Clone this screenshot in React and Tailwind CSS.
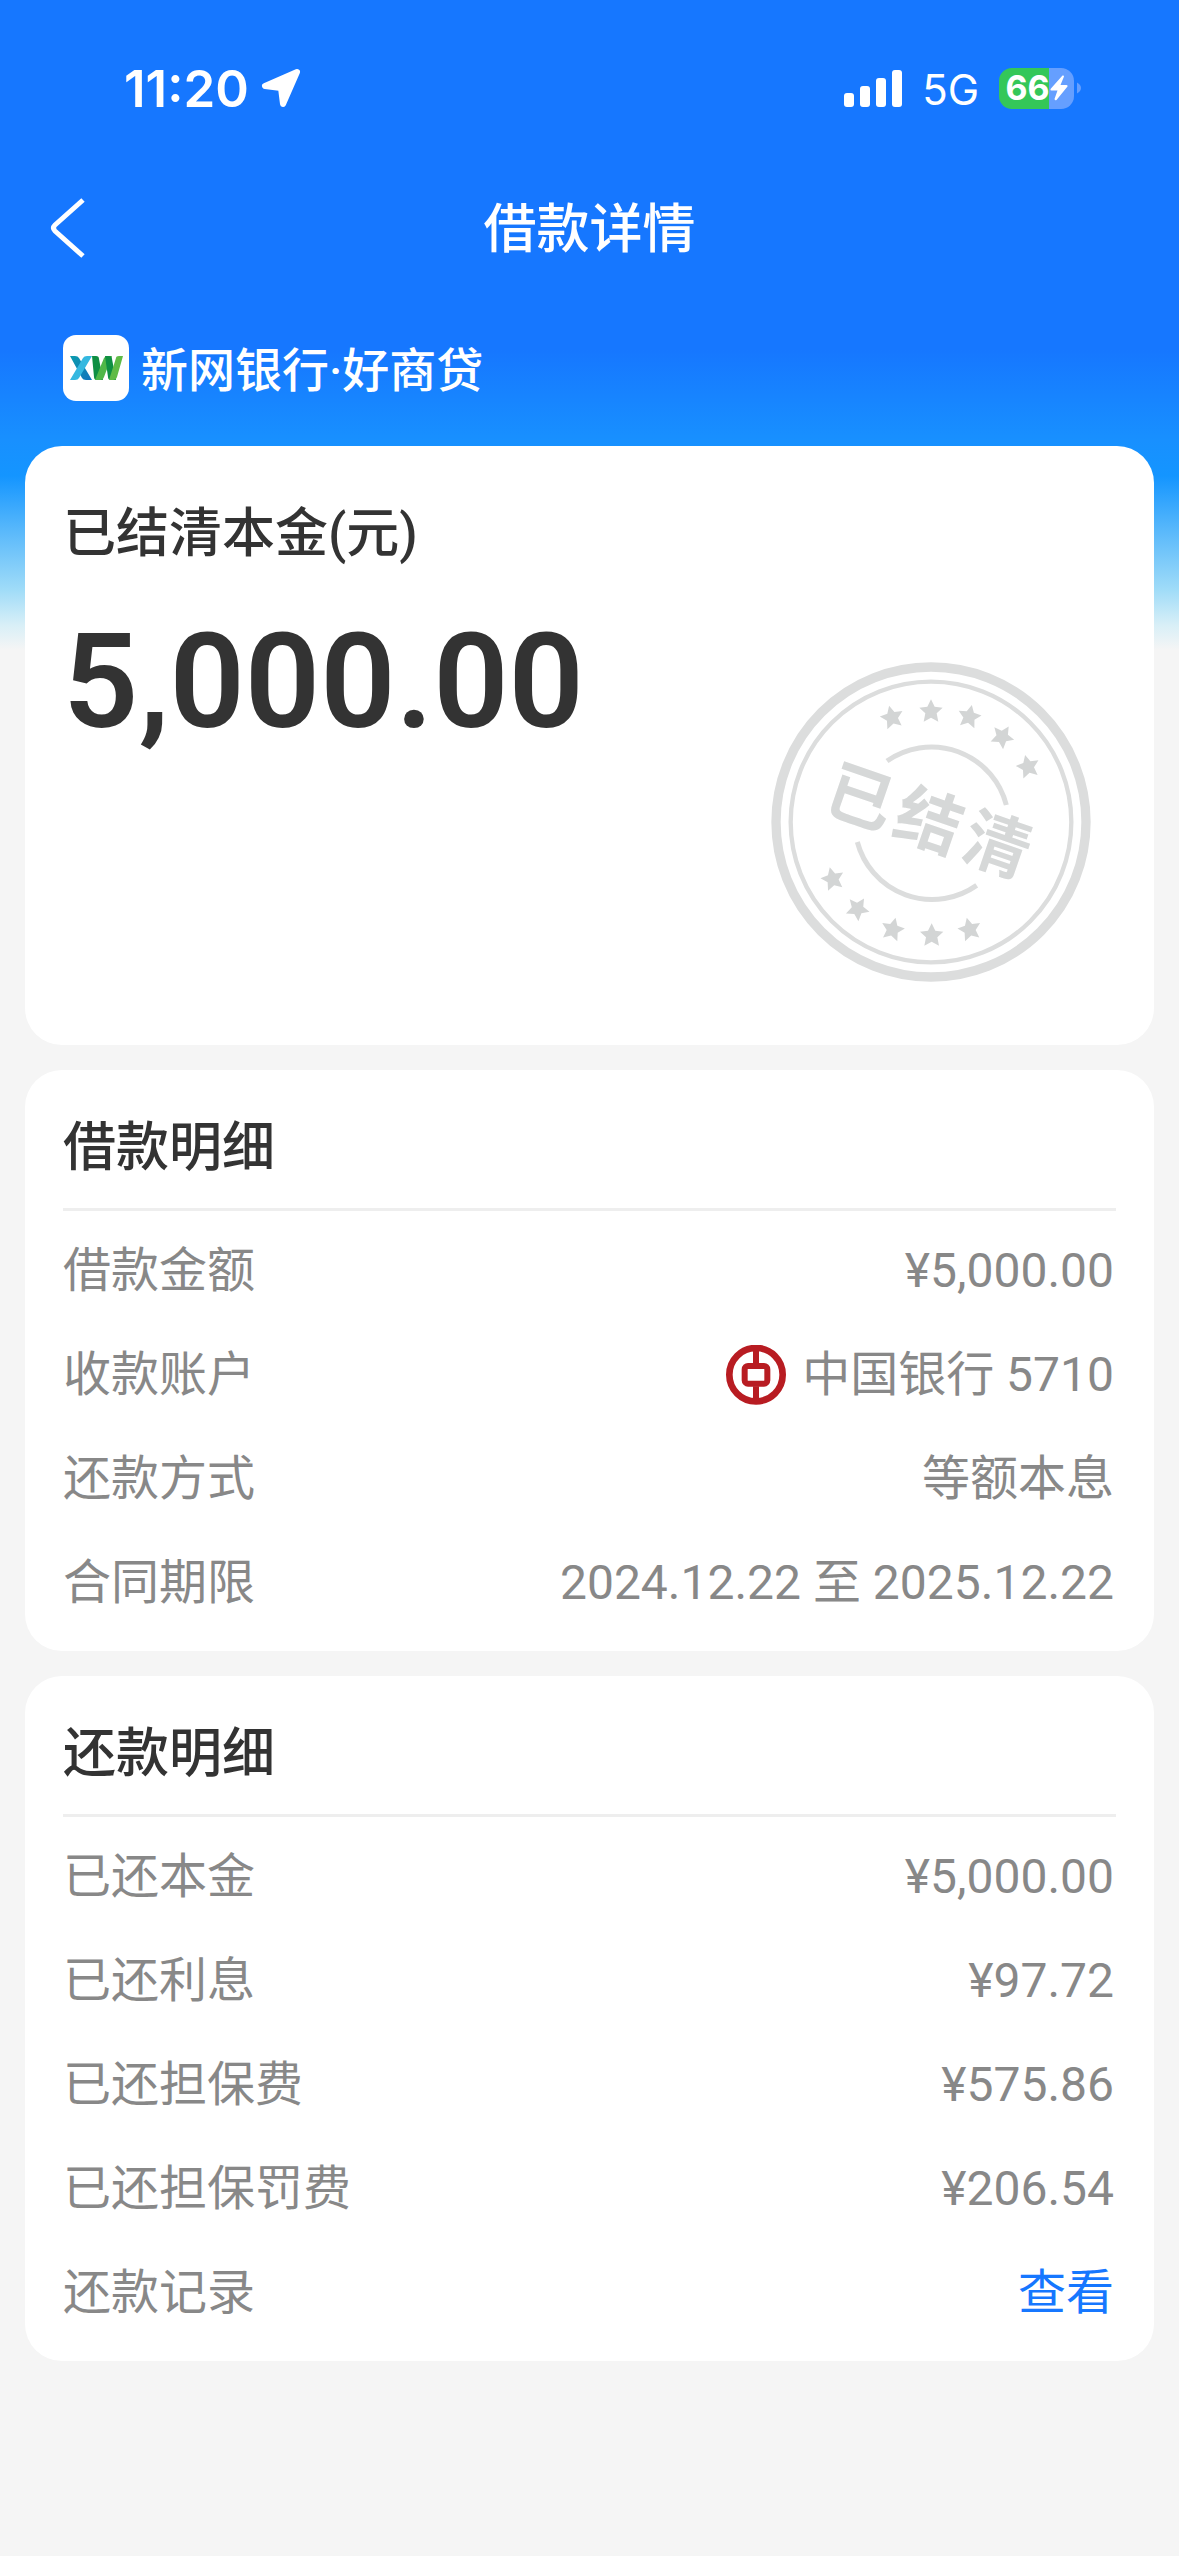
const STAR = "M0 -36 L11 -14 L35 -11 L17 6 L22 31 L0 19 L-22 31 L-17 6 L-35 -11 L-11 -14 Z";

const stampStars = [
  [455, 232, -14],
  [572, 214, 0],
  [687, 230, 12],
  [786, 290, 32],
  [863, 380, -14],
  [277, 717, -14],
  [352, 806, 32],
  [457, 868, 14],
  [574, 886, 0],
  [688, 868, -14],
];

function LocationArrow() {
  return (
    <svg viewBox="0 0 40 40" className="size-10" aria-hidden="true">
      <path
        d="M36 4 L4 18 L20 20 L22 36 Z"
        fill="#fff"
        stroke="#fff"
        strokeWidth="6"
        strokeLinejoin="round"
      />
    </svg>
  );
}

function SignalBars() {
  return (
    <svg viewBox="0 0 58 37" className="h-[37px] w-[58px]" fill="#fff" aria-hidden="true">
      <rect x="0" y="23" width="10" height="14" rx="3" />
      <rect x="16" y="16" width="10" height="21" rx="3" />
      <rect x="32" y="8" width="10" height="29" rx="3" />
      <rect x="48" y="0" width="10" height="37" rx="3" />
    </svg>
  );
}

function Battery() {
  return (
    <div className="flex items-center gap-[3px]">
      <div className="flex h-[41px] w-[75px] items-center justify-center rounded-[13px] bg-[linear-gradient(90deg,#34c759_67%,#659fff_67%)] text-white">
        <span className="font-[Inter,sans-serif] text-[34px] leading-none font-bold">66</span>
        <svg viewBox="0 0 18 26" className="h-[26px] w-[18px]" fill="#fff" aria-hidden="true">
          <path d="M12.500 0.500 L0.500 14 Q0 15.500 1.500 15.500 H7.500 L4.500 24 Q5 26 6.500 25 L17.500 11.500 Q18 10 16.500 10 H10.500 L14 1.500 Q14 0 12.500 0.500 Z" />
        </svg>
      </div>
      <svg viewBox="0 0 5 14" className="h-[14px] w-1" aria-hidden="true">
        <path d="M0 0 Q5 3 5 7 Q5 11 0 14 Z" fill="#659fff" />
      </svg>
    </div>
  );
}

function StatusBar() {
  return (
    <div className="flex h-[176px] items-center justify-between pr-[98px] pl-[124px] text-white">
      <div className="flex items-center gap-3">
        <span className="font-[Inter,sans-serif] text-[51px] leading-none font-semibold">11:20</span>
        <LocationArrow />
      </div>
      <div className="flex items-center gap-5">
        <SignalBars />
        <span className="pt-1 font-[Inter,sans-serif] text-[42px] leading-none">5G</span>
        <Battery />
      </div>
    </div>
  );
}

function XwLogo() {
  return (
    <svg viewBox="0 0 66 66" className="size-[66px]" role="img" aria-label="新网银行">
      <defs>
        <linearGradient id="xwBlue" x1="0" y1="0" x2="1" y2="1">
          <stop offset="0" stopColor="#0b9cae" />
          <stop offset="1" stopColor="#1273bd" />
        </linearGradient>
      </defs>
      <rect width="66" height="66" rx="13" fill="#fff" />
      <path d="M7 21 H12 Q15 21 16 23 L29 45 H23 Q20 45 19 43 Z" fill="url(#xwBlue)" />
      <path d="M29 21 H24 Q21 21 20 23 L7 45 H12 Q15 45 16 43 Z" fill="#35b8e0" />
      <path d="M29 21 H33 Q36 21 36 24 L40 45 H34 Q31 45 31 42 Z" fill="#0f8f43" />
      <path d="M49 21 H45 Q42 21 41 23 L32 45 H37 Q40 45 41 42 Z" fill="#4fb748" />
      <path d="M42 21 H46 Q49 21 49 24 L53 45 H48 Q45 45 45 42 Z" fill="#0f8f43" />
      <path d="M60 21 H56 Q53 21 53 23 L46 45 H50 Q53 45 54 42 Z" fill="#5fbb46" />
    </svg>
  );
}

function BankOfChinaLogo() {
  return (
    <svg viewBox="0 0 180 180" className="size-[60px]" role="img" aria-label="中国银行">
      <g fill="none" stroke="#b81c22">
        <circle cx="90" cy="89" r="80" strokeWidth="20" />
        <rect x="56" y="63" width="68" height="53" rx="10" strokeWidth="18" />
        <path d="M90 12 V56 M90 124 V168" strokeWidth="18" />
      </g>
    </svg>
  );
}

function SettledStamp() {
  return (
    <svg
      viewBox="89 63 966 966"
      className="absolute right-[62px] bottom-[62px] size-[322px]"
      role="img"
      aria-label="已结清"
    >
      <g fill="none" stroke="#dcdddd">
        <circle cx="572" cy="546" r="465" strokeWidth="28" />
        <circle cx="572" cy="546" r="421" strokeWidth="13" />
        <path d="M440 363 A232 232 0 0 1 798 495" strokeWidth="15" />
        <path d="M351 606 A232 232 0 0 0 709 736" strokeWidth="15" />
      </g>
      {stampStars.map(([x, y, angle]) => (
        <path
          key={`${x}-${y}`}
          d={STAR}
          fill="#d3d5d5"
          transform={`translate(${x} ${y}) rotate(${angle})`}
        />
      ))}
      <text
        transform="translate(566 543) rotate(19)"
        x="-217 0 217"
        y="72"
        textAnchor="middle"
        fill="#d6d8d8"
        className="font-['Noto_Sans_CJK_SC',sans-serif] text-[200px] font-bold"
      >
        已结清
      </text>
    </svg>
  );
}

function DetailCard({ title, children }) {
  return (
    <section className="rounded-[37px] bg-white px-[38px] pb-4">
      <h2 className="flex h-[141px] items-center border-b-3 border-[#eeeeee] pt-[18px] text-[53px] leading-none font-medium text-[#333333]">
        {title}
      </h2>
      <dl className="pt-2">{children}</dl>
    </section>
  );
}

function Row({ label, children }) {
  return (
    <div className="flex h-[104px] items-center justify-between text-[48px] leading-none text-[#888888]">
      <dt>{label}</dt>
      <dd className="flex items-center gap-4 pr-[2px]">{children}</dd>
    </div>
  );
}

export default function App() {
  return (
    <div className="min-h-screen bg-[#f5f5f5] bg-[linear-gradient(180deg,#1677ff_0px,#1677ff_350px,#1890ff_440px,#1495ff_476px,#58b8fb_530px,#a0dcf8_590px,#d8eff7_625px,#f5f5f5_650px)] bg-no-repeat font-[Roboto,'Noto_Sans_CJK_SC',sans-serif]">
      <StatusBar />
      <header className="grid h-[104px] grid-cols-[1fr_auto_1fr] items-center px-[48px] text-white">
        <button type="button" aria-label="返回" className="justify-self-start">
          <svg viewBox="0 0 40 60" className="h-[60px] w-10" aria-hidden="true">
            <path d="M35 2 L7 27 Q4 30 7 33 L35 58" fill="none" stroke="#fff" strokeWidth="5" />
          </svg>
        </button>
        <h1 className="pt-1 text-[53px] leading-none font-medium">借款详情</h1>
      </header>
      <main className="px-[25px]">
        <div className="flex h-[166px] items-center gap-3 px-[38px] pt-[10px] text-white">
          <XwLogo />
          <p className="pt-1 text-[47px] leading-none font-medium">新网银行·好商贷</p>
        </div>
        <div className="flex flex-col gap-[25px]">
          <section className="relative h-[599px] rounded-[37px] bg-white px-[38px] pt-[62px] text-[#333333]">
            <h2 className="text-[53px] leading-none font-medium">已结清本金(元)</h2>
            <p className="pt-[55px] text-[132px] leading-none font-semibold">5,000.00</p>
            <SettledStamp />
          </section>
          <DetailCard title="借款明细">
            <Row label="借款金额">¥5,000.00</Row>
            <Row label="收款账户">
              <BankOfChinaLogo />
              <span>中国银行 5710</span>
            </Row>
            <Row label="还款方式">等额本息</Row>
            <Row label="合同期限">2024.12.22 至 2025.12.22</Row>
          </DetailCard>
          <DetailCard title="还款明细">
            <Row label="已还本金">¥5,000.00</Row>
            <Row label="已还利息">¥97.72</Row>
            <Row label="已还担保费">¥575.86</Row>
            <Row label="已还担保罚费">¥206.54</Row>
            <Row label="还款记录">
              <a href="#records" className="text-[#1677ff]">
                查看
              </a>
            </Row>
          </DetailCard>
        </div>
      </main>
    </div>
  );
}
